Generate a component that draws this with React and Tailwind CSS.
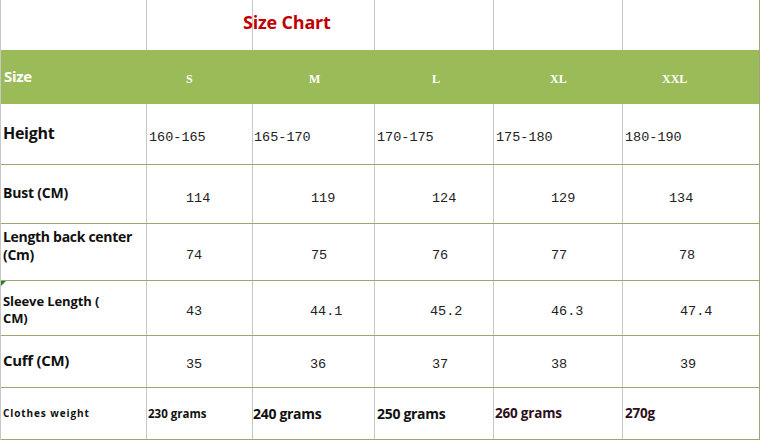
import React from "react";

const cols = "grid grid-cols-[146px_106px_122px_119px_129px_1fr]";
const sans = "font-['Open_Sans',_'Noto_Sans',sans-serif]";
const mono = "font-['Liberation_Mono',monospace]";
const serif = "font-['Liberation_Serif',serif]";

function Row({ h, label, labelCls, values, valueCls, padList, align = "items-center" }) {
  return (
    <div className={`${cols} ${h} border-b border-[#9ea474]`}>
      <div className={`flex ${align} border-r border-[#c8c8c8] pl-[2px] ${labelCls}`}>{label}</div>
      {values.map((v, i) => (
        <div
          key={i}
          className={`flex ${align} ${i < 4 ? "border-r border-[#c8c8c8]" : ""} ${padList[i]} ${
            Array.isArray(valueCls) ? valueCls[i] : valueCls
          }`}
        >
          {v}
        </div>
      ))}
    </div>
  );
}

export default function App() {
  return (
    <div className="w-[762px] h-[441px] bg-white overflow-hidden">
      <div className="w-[760px] border-r border-l border-[#9ea474] border-l-[#c8c8c8]">
        {/* title row */}
        <div className={`${cols} h-[50px] relative`}>
          {[0, 1, 2, 3, 4].map((i) => (
            <div key={i} className="border-r border-[#c8c8c8]" />
          ))}
          <div />
          <div className={`absolute left-[242px] top-[9px] ${sans} font-bold text-[18px] tracking-[-0.2px] text-[#c00000]`}>
            Size Chart
          </div>
        </div>
        {/* header */}
        <div className={`${cols} h-[54px] bg-[#9bbb59] text-white`}>
          <div className={`flex items-center pl-[3px] pb-[2px] ${sans} font-bold text-[15px] tracking-[-0.3px]`}>Size</div>
          {["S", "M", "L", "XL", "XXL"].map((s, i) => (
            <div
              key={s}
              className={`flex items-center pt-[3px] ${serif} font-bold text-[12px] ${
                ["pl-[39px]", "pl-[56px]", "pl-[57px]", "pl-[56px]", "pl-[39px]"][i]
              }`}
            >
              {s}
            </div>
          ))}
        </div>
        <Row
          h="h-[61px]"
          label="Height"
          labelCls={`${sans} font-bold text-[16px] tracking-[-0.3px] text-[#111] pb-[2px]`}
          values={["160-165", "165-170", "170-175", "175-180", "180-190"]}
          valueCls={`${mono} text-[13.5px] text-[#222] pt-[9px]`}
          padList={["pl-[2px]", "pl-[1px]", "pl-[2px]", "pl-[2px]", "pl-[2px]"]}
        />
        <Row
          h="h-[59px]"
          label="Bust (CM)"
          labelCls={`${sans} font-bold text-[14px] tracking-[-0.2px] text-[#111] pb-[4px]`}
          values={["114", "119", "124", "129", "134"]}
          valueCls={`${mono} text-[13.5px] text-[#222] pt-[10px]`}
          padList={["pl-[39px]", "pl-[58px]", "pl-[57px]", "pl-[57px]", "pl-[46px]"]}
        />
        <Row
          h="h-[57px]"
          label={
            <span className="leading-[18px]">
              Length back center
              <br />
              (Cm)
            </span>
          }
          labelCls={`${sans} font-bold text-[14px] tracking-[-0.3px] text-[#111] pb-[13px]`}
          values={["74", "75", "76", "77", "78"]}
          valueCls={`${mono} text-[13.5px] text-[#222] pt-[8px]`}
          padList={["pl-[39px]", "pl-[58px]", "pl-[57px]", "pl-[57px]", "pl-[56px]"]}
        />
        <div className="relative">
          <div className="absolute left-0 top-0 w-0 h-0 border-t-[5px] border-r-[5px] border-t-[#2e7d20] border-r-transparent" />
        </div>
        <Row
          h="h-[55px]"
          label={
            <span className="leading-[17px]">
              Sleeve Length (
              <br />
              CM)
            </span>
          }
          labelCls={`${sans} font-bold text-[13px] tracking-[-0.1px] text-[#111] pt-[3px]`}
          values={["43", "44.1", "45.2", "46.3", "47.4"]}
          valueCls={`${mono} text-[13.5px] text-[#222] pt-[8px]`}
          padList={["pl-[39px]", "pl-[57px]", "pl-[55px]", "pl-[57px]", "pl-[57px]"]}
        />
        <Row
          h="h-[52px]"
          label="Cuff (CM)"
          labelCls={`${sans} font-bold text-[15px] tracking-[-0.3px] text-[#111] pb-[2px]`}
          values={["35", "36", "37", "38", "39"]}
          valueCls={`${mono} text-[13.5px] text-[#222] pt-[8px]`}
          padList={["pl-[39px]", "pl-[57px]", "pl-[57px]", "pl-[57px]", "pl-[57px]"]}
        />
        <Row
          h="h-[52px]"
          label="Clothes weight"
          labelCls={`${sans} font-bold text-[10px] tracking-[0.9px] text-[#111]`}
          values={["230 grams", "240 grams", "250 grams", "260 grams", "270g"]}
          valueCls={[
            `${sans} font-bold text-[11.5px] text-[#111]`,
            `${sans} font-bold text-[14px] tracking-[-0.3px] text-[#111] pb-[1px]`,
            `${sans} font-bold text-[14px] tracking-[-0.3px] text-[#111] pb-[1px]`,
            `${sans} font-bold text-[13.5px] tracking-[-0.2px] text-[#2d1020]`,
            `${sans} font-bold text-[13.5px] tracking-[-0.2px] text-[#2d1020]`,
          ]}
          padList={["pl-[1px]", "pl-0", "pl-[2px]", "pl-[1px]", "pl-[2px]"]}
        />
      </div>
    </div>
  );
}
